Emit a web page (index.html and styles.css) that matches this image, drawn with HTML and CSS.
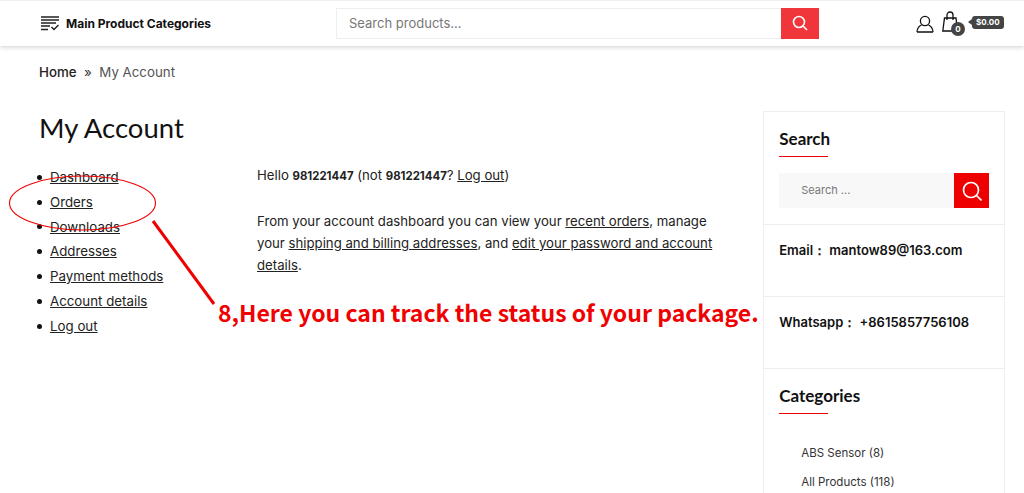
FILE: index.html
```html
<!DOCTYPE html>
<html lang="en">
<head>
  <meta charset="UTF-8" />
  <meta name="viewport" content="width=device-width, initial-scale=1.0"/>
  <title>My Account</title>
  <link rel="stylesheet" href="styles.css">
</head>
<body>
<header class="topbar">
  <div class="cat-menu">
    <svg class="cat-icon" width="18" height="15" viewBox="0 0 18 15" fill="none" stroke="#222" stroke-width="1.3">
      <path d="M0 1h18M0 4h18M0 7h15M0 10h9M0 13.500h7"/>
      <path d="M10.500 11l2.500 2.500 4.500-4.500" stroke-width="1.500"/>
    </svg>
    <span>Main Product Categories</span>
  </div>
  <div class="top-search">
    <div class="top-search-input">Search products...</div>
    <div class="top-search-btn">
      <svg width="16" height="16" viewBox="0 0 16 16" fill="none" stroke="#fff" stroke-width="1.600">
        <circle cx="7" cy="7" r="5.500"/><path d="M11 11l4 4"/>
      </svg>
    </div>
  </div>
  <div class="top-icons">
    <svg width="18" height="18" viewBox="0 0 18 18" fill="none" stroke="#111" stroke-width="1.300">
      <circle cx="9" cy="6" r="4.600"/><path d="M1 17c0-4 3-6.500 4.500-6.800M17 17c0-4-3-6.500-4.500-6.800M1 17h16"/>
    </svg>
    <div class="bag">
      <svg width="16" height="21" viewBox="0 0 16 21" fill="none" stroke="#111" stroke-width="1.300">
        <path d="M2.500 7h11.500l1.500 13H.8z"/><path d="M5 9V4a3 3 0 0 1 6 0v5"/>
      </svg>
      <span class="bag-count">0</span>
    </div>
    <span class="bag-total">$0.00</span>
  </div>
</header>

<div class="page">
  <main class="main">
    <div class="crumbs"><b>Home</b><i>»</i><span>My Account</span></div>
    <h1>My Account</h1>
    <div class="account">
      <ul class="account-nav">
        <li><a href="#">Dashboard</a></li>
        <li><a href="#">Orders</a></li>
        <li><a href="#">Downloads</a></li>
        <li><a href="#">Addresses</a></li>
        <li><a href="#">Payment methods</a></li>
        <li><a href="#">Account details</a></li>
        <li><a href="#">Log out</a></li>
      </ul>
      <div class="account-text">
        <p>Hello <strong>981221447</strong> (not <strong>981221447</strong>? <a href="#">Log out</a>)</p>
        <p>From your account dashboard you can view your <a href="#">recent orders</a>, manage your <a href="#">shipping and billing addresses</a>, and <a href="#">edit your password and account details</a>.</p>
      </div>
    </div>
  </main>

  <aside class="sidebar">
    <section class="widget widget-search">
      <h2>Search</h2>
      <div class="side-search">
        <div class="side-search-input">Search ...</div>
        <div class="side-search-btn">
          <svg width="20" height="20" viewBox="0 0 20 20" fill="none" stroke="#fff" stroke-width="1.700">
            <circle cx="9" cy="9" r="7.500"/><path d="M14.500 14.500l5 5"/>
          </svg>
        </div>
      </div>
    </section>
    <section class="widget widget-contact">Email： mantow89@163.com</section>
    <section class="widget widget-contact">Whatsapp： +8615857756108</section>
    <section class="widget widget-cats">
      <h2>Categories</h2>
      <ul>
        <li>ABS Sensor (8)</li>
        <li>All Products (118)</li>
      </ul>
    </section>
  </aside>
</div>

<svg class="markup" width="1024" height="493" viewBox="0 0 1024 493" fill="none" stroke="#f00000">
  <ellipse cx="82.500" cy="203" rx="73" ry="27" stroke-width="1.100"/>
  <path d="M153 221l61 83" stroke-width="3"/>
</svg>
<div class="markup-note">8,Here you can track the status of your package.</div>
</body>
</html>
```

FILE: styles.css
```css
html, body {
  height: 493px;
  overflow: hidden;
}
body {
  margin: 0;
  background: #fff;
  color: #222;
  font-family: 'Inter', 'Open Sans', sans-serif;
  font-size: 13px;
  position: relative;
}
a { color: #222; }

.topbar {
  height: 46px;
  box-sizing: border-box;
  padding: 0 0 0 41px;
  border-top: 1px solid #f0f0f0;
  display: flex;
  align-items: center;
  box-shadow: 0 1px 5px rgba(0,0,0,0.2);
}
.cat-menu {
  flex: none;
  width: 295px;
  display: flex;
  align-items: center;
  gap: 7px;
  font-size: 12px;
  font-weight: 700;
  color: #111;
}
.top-search {
  flex: none;
  display: flex;
  height: 31px;
  margin-top: -1px;
}
.top-search-input {
  width: 432px;
  padding-left: 12px;
  border: 1px solid #eee;
  border-right: none;
  line-height: 29px;
  font-size: 13px;
  color: #777;
}
.top-search-btn {
  width: 38px;
  background: #f0353b;
  display: flex;
  align-items: center;
  justify-content: center;
}
.top-icons {
  flex: none;
  margin-left: 97px;
  display: flex;
  align-items: center;
  gap: 8px;
}
.bag { position: relative; height: 21px; margin-top: -4px; }
.bag-count {
  position: absolute;
  left: 9px;
  top: 11px;
  width: 14px;
  height: 14px;
  border-radius: 50%;
  background: #444;
  color: #fff;
  font-size: 8px;
  font-weight: 700;
  line-height: 14px;
  text-align: center;
}
.bag-total {
  position: relative;
  margin-left: 6px;
  margin-top: -3px;
  padding: 0 4px;
  height: 13px;
  line-height: 13px;
  border-radius: 3px;
  background: #444;
  color: #fff;
  font-size: 8px;
  font-weight: 700;
}
.bag-total::before {
  content: "";
  position: absolute;
  left: -4px;
  top: 3px;
  border-style: solid;
  border-width: 3.500px 4px 3.500px 0;
  border-color: transparent #444 transparent transparent;
}

.page {
  display: flex;
  padding: 0 19px 0 39px;
  height: 447px;
}
.main { width: 725px; }
.crumbs {
  margin-top: 18px;
  display: flex;
  gap: 7.500px;
  line-height: 16px;
  font-size: 13.300px;
  color: #555;
}
.crumbs b { font-weight: 500; color: #222; }
.crumbs i { font-style: normal; color: #333; }
h1 {
  margin: 28px 0 0;
  font-family: 'Lato', sans-serif;
  font-size: 27.500px;
  font-weight: 400;
  line-height: 40px;
  color: #111;
}
.account {
  display: flex;
  margin-top: 17px;
}
.account-nav {
  width: 218px;
  margin: 0;
  padding: 0;
  list-style: none;
  font-size: 13.300px;
  line-height: 24.800px;
}
.account-nav li {
  display: flex;
  align-items: center;
  gap: 8px;
  margin-left: -2px;
}
.account-nav li::before {
  content: "";
  width: 5px;
  height: 5px;
  border-radius: 50%;
  background: #111;
}
.account-text {
  width: 465px;
  font-size: 13.200px;
  line-height: 22px;
  margin-top: -1px;
}
.account-text p { margin: 0 0 23px; }
.account-text strong { font-size: 11.400px; font-weight: 700; }

.sidebar {
  width: 242px;
  box-sizing: border-box;
  margin-top: 65px;
  border: 1px solid #eee;
  border-bottom: none;
}
.widget {
  padding: 0 15px;
  border-bottom: 1px solid #eee;
}
h2 {
  margin: 0;
  position: relative;
  font-family: 'Lato', sans-serif;
  font-size: 17px;
  font-weight: 700;
  color: #111;
  line-height: 22px;
}
h2::after {
  content: "";
  position: absolute;
  left: 0;
  bottom: -7px;
  width: 49px;
  height: 1px;
  background: #f00000;
}
.widget-search { height: 113px; padding-top: 16px; box-sizing: border-box; }
.side-search { display: flex; margin-top: 23px; height: 35px; }
.side-search-input {
  flex: 1;
  background: #f8f8f8;
  padding-left: 22px;
  line-height: 35px;
  font-size: 11px;
  color: #777;
}
.side-search-btn {
  width: 35px;
  background: #ee0000;
  display: flex;
  align-items: center;
  justify-content: center;
}
.widget-contact {
  height: 72px;
  box-sizing: border-box;
  padding-top: 15px;
  font-size: 13px;
  font-weight: 600;
  color: #111;
  line-height: 20px;
}
.widget-cats { padding-top: 16px; border-bottom: none; }
.widget-cats ul {
  list-style: none;
  margin: 32px 0 0;
  padding: 0 0 0 22px;
  font-size: 11.500px;
  line-height: 29px;
  color: #333;
}

.markup {
  position: absolute;
  left: 0;
  top: 0;
}
.markup-note {
  position: absolute;
  left: 218px;
  top: 295px;
  font-family: 'Noto Sans CJK SC', sans-serif;
  font-size: 23px;
  font-weight: 700;
  line-height: 34px;
  color: #f00000;
  white-space: nowrap;
}
```
